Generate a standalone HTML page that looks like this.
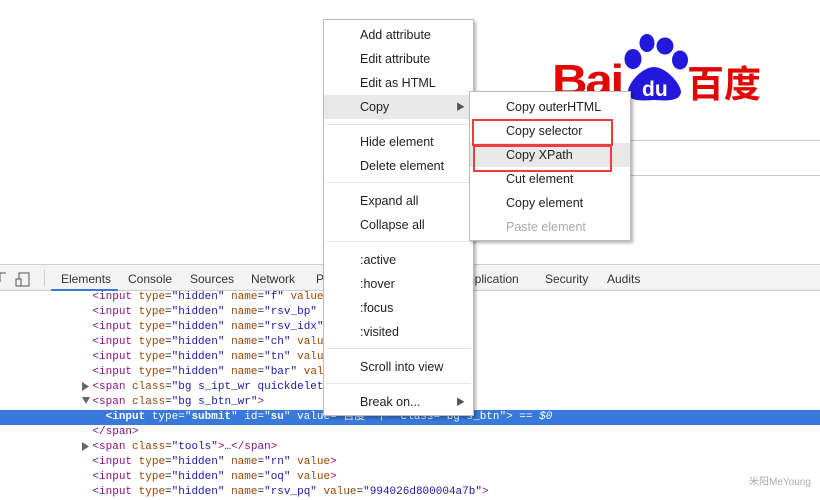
<!DOCTYPE html>
<html><head><meta charset="utf-8"><style>
*{margin:0;padding:0;box-sizing:border-box}
body{width:820px;height:495px;overflow:hidden;background:#fff;position:relative;font-family:"Liberation Sans","Noto Sans CJK SC",sans-serif}
.abs{position:absolute}
.tb{left:0;top:264px;width:820px;height:27px;background:#f3f3f3;border-top:1px solid #ccc;border-bottom:1px solid #ccc;font-size:12px;color:#333}
.tb span{position:absolute;top:7px}
.code{font-family:"Liberation Mono",monospace;font-size:11px;white-space:pre;color:#222}
.line{position:absolute;left:0;width:820px;height:15px;line-height:15px}
.t{color:#881280}.a{color:#994500}.v{color:#1a1aa6}.g{color:#888}
.sel{background:#3879d9;color:#fff}
.menu{background:#fff;border:1px solid #bbb;box-shadow:2px 2px 3px rgba(0,0,0,.3);font-size:12.5px;color:#222}
.mi{position:absolute;left:0;right:0;height:24px;line-height:24px}
.sep{position:absolute;left:2px;right:2px;height:1px;background:#e6e6e6}
</style></head><body>
<div class="abs" style="left:470px;top:140px;width:350px;height:1px;background:#c8c8c8"></div>
<div class="abs" style="left:470px;top:175px;width:350px;height:1px;background:#c8c8c8"></div>
<div class="abs" style="left:552px;top:56px;font:bold 44px 'Liberation Sans',sans-serif;color:#e10601;letter-spacing:-2px;line-height:50px;transform:scaleX(1.12);transform-origin:0 0">Bai</div>
<svg class="abs" style="left:620px;top:30px" width="75" height="75" viewBox="620 30 75 75">
<ellipse cx="633" cy="59" rx="8.5" ry="10" fill="#2319dc"/>
<ellipse cx="647" cy="43" rx="7.5" ry="9" fill="#2319dc"/>
<ellipse cx="665" cy="46" rx="8.5" ry="8.5" fill="#2319dc"/>
<ellipse cx="680" cy="60" rx="8" ry="9.5" fill="#2319dc"/>
<path d="M654 67 C642 67 627 84 628 93 C629 101 640 101 654 100 C668 101 680 101 681 92 C681 84 666 67 654 67Z" fill="#2319dc"/>
<text x="642" y="96" font-family="Liberation Sans" font-weight="bold" font-size="21" fill="#fff">du</text>
</svg>
<div class="abs" style="left:687px;top:60px;font:bold 37px 'Noto Sans CJK SC',sans-serif;color:#e10601;line-height:42px">百度</div>
<div class="abs tb">
<svg class="abs" style="left:0;top:6px" width="35" height="16"><path d="M0 2h6M0 2v9" stroke="#555" fill="none"/><rect x="19" y="2" width="10" height="13" fill="none" stroke="#555"/><rect x="16" y="8" width="5" height="7" fill="#f3f3f3" stroke="#555"/></svg>
<div class="abs" style="left:44px;top:5px;width:1px;height:16px;background:#ccc"></div>
<span style="left:61px">Elements</span>
<div class="abs" style="left:51px;top:24px;width:67px;height:2px;background:#3879d9"></div>
<span style="left:128px">Console</span><span style="left:190px">Sources</span><span style="left:251px">Network</span><span style="left:316px">Pe</span>
<span style="left:468px">pplication</span><span style="left:545px">Security</span><span style="left:607px">Audits</span>
</div>
<div class="code">
<div class="line" style="top:290px">              <span class="t">&lt;input</span> <span class="a">type</span>=<span class="v">"hidden"</span> <span class="a">name</span>=<span class="v">"f"</span> <span class="a">value</span></div>
<div class="line" style="top:305px">              <span class="t">&lt;input</span> <span class="a">type</span>=<span class="v">"hidden"</span> <span class="a">name</span>=<span class="v">"rsv_bp"</span></div>
<div class="line" style="top:320px">              <span class="t">&lt;input</span> <span class="a">type</span>=<span class="v">"hidden"</span> <span class="a">name</span>=<span class="v">"rsv_idx"</span></div>
<div class="line" style="top:335px">              <span class="t">&lt;input</span> <span class="a">type</span>=<span class="v">"hidden"</span> <span class="a">name</span>=<span class="v">"ch"</span> <span class="a">valu</span></div>
<div class="line" style="top:350px">              <span class="t">&lt;input</span> <span class="a">type</span>=<span class="v">"hidden"</span> <span class="a">name</span>=<span class="v">"tn"</span> <span class="a">valu</span></div>
<div class="line" style="top:365px">              <span class="t">&lt;input</span> <span class="a">type</span>=<span class="v">"hidden"</span> <span class="a">name</span>=<span class="v">"bar"</span> <span class="a">val</span></div>
<div class="line" style="top:380px">              <span class="t">&lt;span</span> <span class="a">class</span>=<span class="v">"bg s_ipt_wr quickdelet</span></div>
<div class="line" style="top:395px">              <span class="t">&lt;span</span> <span class="a">class</span>=<span class="v">"bg s_btn_wr"</span><span class="t">&gt;</span></div>
<div class="line sel" style="top:410px">                <b>&lt;input</b> type="<b>submit</b>" id="<b>su</b>" value="百度一下" class="bg s_btn"&gt; == <i>$0</i></div>
<div class="line" style="top:425px">              <span class="t">&lt;/span&gt;</span></div>
<div class="line" style="top:440px">              <span class="t">&lt;span</span> <span class="a">class</span>=<span class="v">"tools"</span><span class="t">&gt;</span>…<span class="t">&lt;/span&gt;</span></div>
<div class="line" style="top:455px">              <span class="t">&lt;input</span> <span class="a">type</span>=<span class="v">"hidden"</span> <span class="a">name</span>=<span class="v">"rn"</span> <span class="a">value</span><span class="t">&gt;</span></div>
<div class="line" style="top:470px">              <span class="t">&lt;input</span> <span class="a">type</span>=<span class="v">"hidden"</span> <span class="a">name</span>=<span class="v">"oq"</span> <span class="a">value</span><span class="t">&gt;</span></div>
<div class="line" style="top:485px">              <span class="t">&lt;input</span> <span class="a">type</span>=<span class="v">"hidden"</span> <span class="a">name</span>=<span class="v">"rsv_pq"</span> <span class="a">value</span>=<span class="v">"994026d800004a7b"</span><span class="t">&gt;</span></div>
</div>
<svg class="abs" style="left:82px;top:382px" width="8" height="70"><path d="M0 0L7 4.5L0 9Z M0 15H8L4 22Z M0 60L7 64.5L0 69Z" fill="#666"/></svg>
<div class="abs" style="left:749px;top:473px;font-size:10px;color:#aaa">米阳MeYoung</div>
<div class="abs menu" style="left:323px;top:19px;width:151px;height:397px">
<div class="mi" style="top:3px;padding-left:36px">Add attribute</div>
<div class="mi" style="top:27px;padding-left:36px">Edit attribute</div>
<div class="mi" style="top:51px;padding-left:36px">Edit as HTML</div>
<div class="mi" style="top:75px;padding-left:36px;background:#e8e8e8">Copy<span style="position:absolute;right:8px;font-size:9px;color:#555">▶</span></div>
<div class="sep" style="top:104px"></div>
<div class="mi" style="top:110px;padding-left:36px">Hide element</div>
<div class="mi" style="top:134px;padding-left:36px">Delete element</div>
<div class="sep" style="top:162px"></div>
<div class="mi" style="top:169px;padding-left:36px">Expand all</div>
<div class="mi" style="top:193px;padding-left:36px">Collapse all</div>
<div class="sep" style="top:221px"></div>
<div class="mi" style="top:228px;padding-left:36px">:active</div>
<div class="mi" style="top:252px;padding-left:36px">:hover</div>
<div class="mi" style="top:276px;padding-left:36px">:focus</div>
<div class="mi" style="top:300px;padding-left:36px">:visited</div>
<div class="sep" style="top:328px"></div>
<div class="mi" style="top:335px;padding-left:36px">Scroll into view</div>
<div class="sep" style="top:363px"></div>
<div class="mi" style="top:370px;padding-left:36px">Break on...<span style="position:absolute;right:8px;font-size:9px;color:#555">▶</span></div>
</div>
<div class="abs menu" style="left:469px;top:91px;width:162px;height:150px">
<div class="mi" style="top:3px;padding-left:36px">Copy outerHTML</div>
<div class="mi" style="top:27px;padding-left:36px">Copy selector</div>
<div class="mi" style="top:51px;padding-left:36px;background:#e8e8e8">Copy XPath</div>
<div class="mi" style="top:75px;padding-left:36px">Cut element</div>
<div class="mi" style="top:99px;padding-left:36px">Copy element</div>
<div class="mi" style="top:123px;padding-left:36px;color:#aaa">Paste element</div>
</div>
<div class="abs" style="left:472px;top:119px;width:141px;height:27px;border:2px solid #f03c3c"></div>
<div class="abs" style="left:473px;top:145px;width:139px;height:27px;border:2px solid #f03c3c"></div>
</body></html>
